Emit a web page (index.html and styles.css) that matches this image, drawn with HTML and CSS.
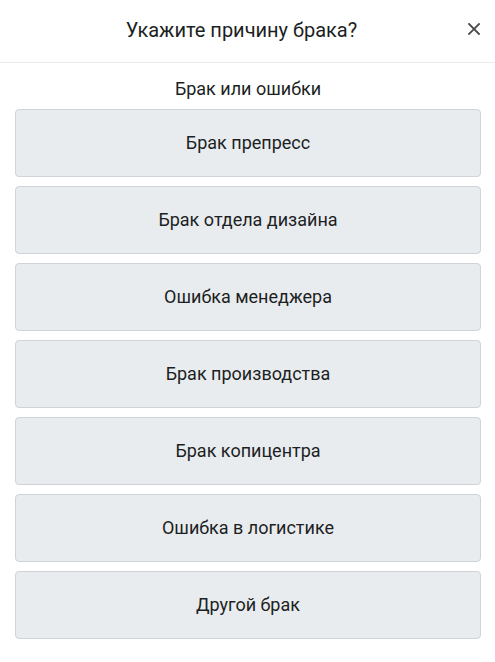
FILE: index.html
```html
<!DOCTYPE html>
<html lang="ru">
<head>
    <meta charset="UTF-8">
    <meta name="viewport" content="width=device-width, initial-scale=1.0">
    <title>Причина брака</title>
    <link rel="stylesheet" href="styles.css">
</head>
<body>

    <!-- Модальное окно -->
    <div class="modal">
        <div class="modal-header">
            <h5 class="modal-title">Укажите причину брака?</h5>
            <button class="close" type="button" aria-label="Закрыть">
                <svg width="12" height="12" viewBox="0 0 12 12">
                    <path d="M1 1 L11 11 M11 1 L1 11" stroke="#4a4a4a" stroke-width="1.8" stroke-linecap="square"/>
                </svg>
            </button>
        </div>

        <div class="modal-body">
            <p class="group-title">Брак или ошибки</p>
            <div class="reasons">
                <button class="reason">Брак препресс</button>
                <button class="reason">Брак отдела дизайна</button>
                <button class="reason">Ошибка менеджера</button>
                <button class="reason">Брак производства</button>
                <button class="reason">Брак копицентра</button>
                <button class="reason">Ошибка в логистике</button>
                <button class="reason">Другой брак</button>
            </div>
        </div>
    </div>

</body>
</html>
```

FILE: styles.css
```css
/* Общие стили */
body {
    font-family: Roboto, "Liberation Sans", Arial, sans-serif;
    margin: 0;
    padding: 0;
    color: #1c1f23;
    background-color: #fff;
}

.modal {
    width: 495px;
}

/* Шапка */
.modal-header {
    position: relative;
    padding: 15px 28px 17px 16px;
    border-bottom: 1px solid #e9ecef;
    text-align: center;
}

.modal-title {
    margin: 0;
    font-size: 20px;
    font-weight: 400;
    line-height: 30px;
}

.close {
    position: absolute;
    top: 23px;
    right: 15px;
    display: flex;
    background: none;
    border: 0;
    padding: 0;
    cursor: pointer;
}

/* Тело */
.modal-body {
    padding: 14px 14px 16px 15px;
}

.group-title {
    margin: 0 0 8px;
    text-align: center;
    font-size: 18px;
    line-height: 24px;
}

.reasons {
    display: flex;
    flex-direction: column;
    gap: 9px;
}

.reason {
    height: 68px;
    padding-bottom: 2px;
    background-color: #e9ecef;
    border: 1px solid #ced4da;
    border-radius: 4px;
    font-family: inherit;
    font-size: 18px;
    color: #1c1f23;
    cursor: pointer;
}

.reason:hover {
    background-color: #dde1e5;
}
```
